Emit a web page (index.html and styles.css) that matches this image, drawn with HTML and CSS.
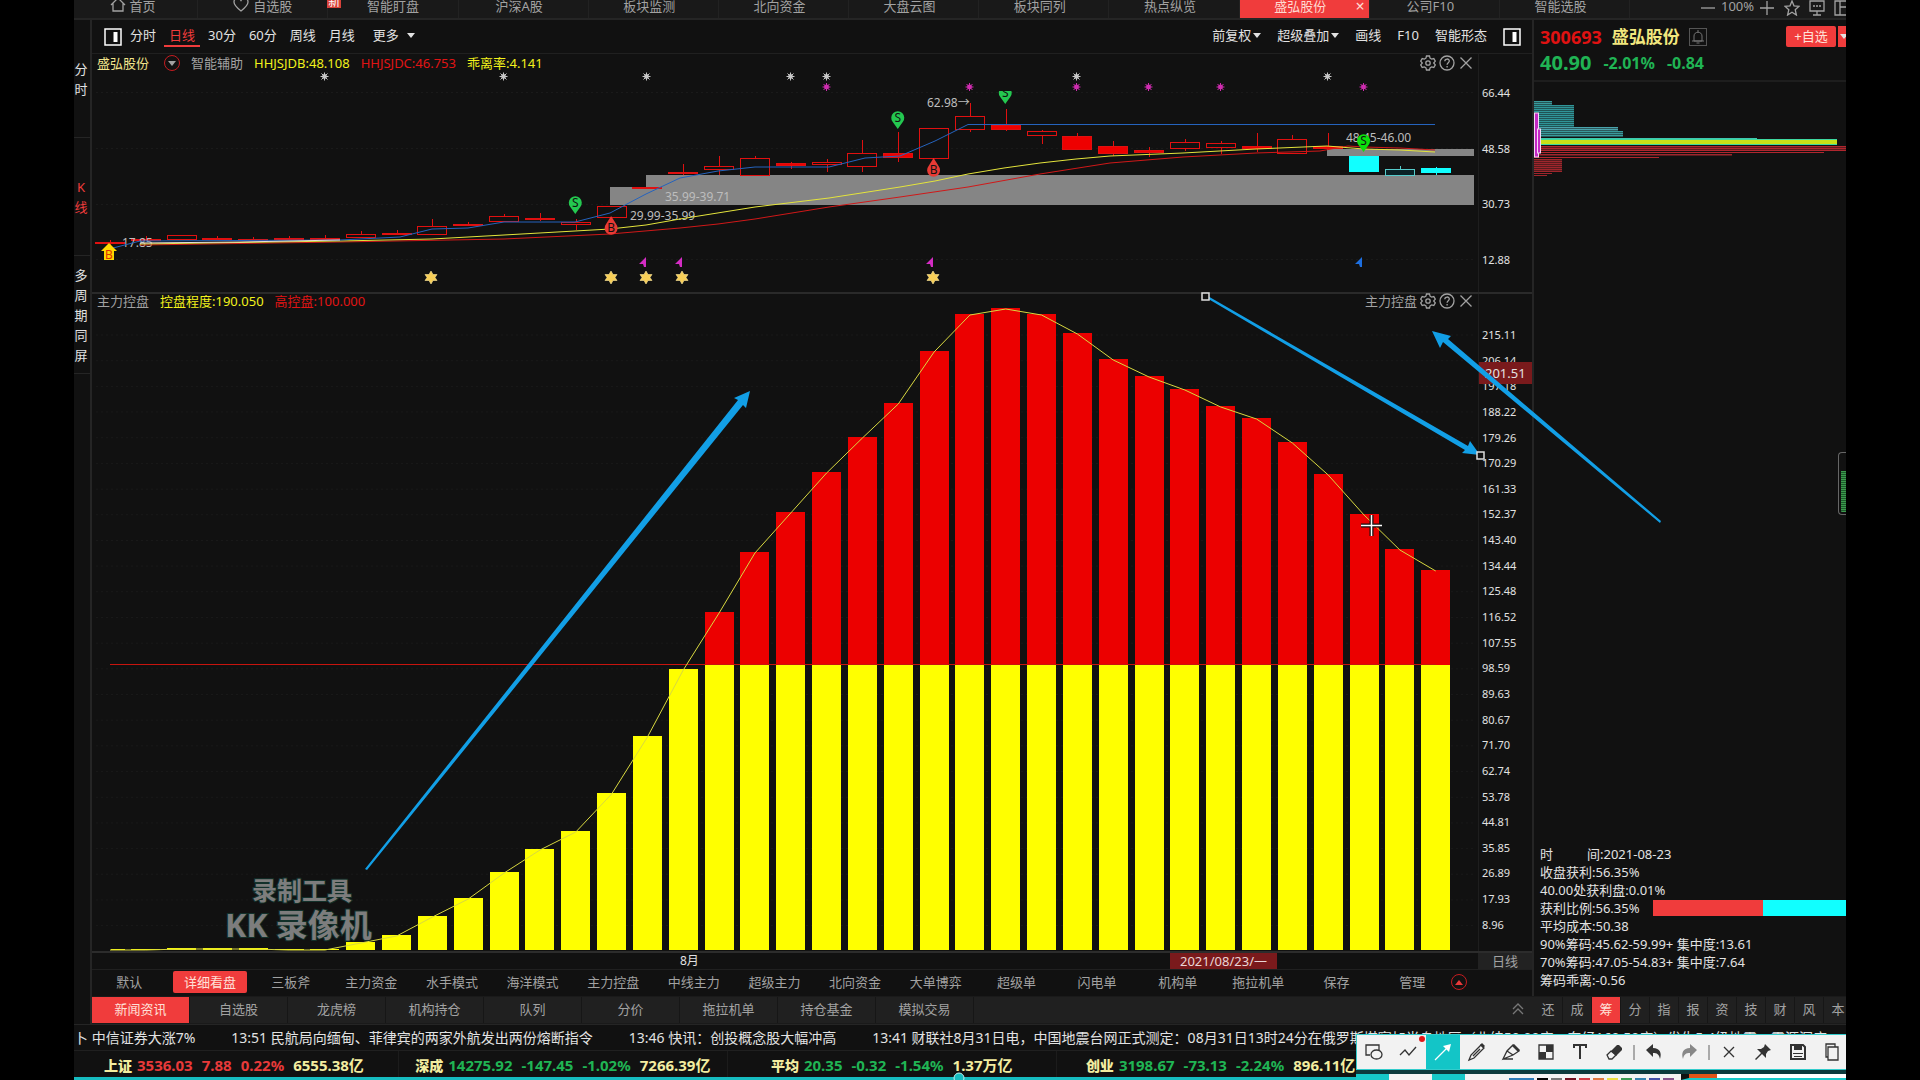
FILE: index.html
```html
<!DOCTYPE html>
<html lang="zh-CN">
<head>
<meta charset="utf-8">
<meta name="viewport" content="width=device-width, initial-scale=1">
<title>盛弘股份 300693</title>
<link rel="stylesheet" href="styles.css">
</head>
<body>
<svg class="defs" aria-hidden="true">
  <symbol id="gear" viewBox="0 0 16 16"><path d="M6.500 1h3l.6 2.200 1.500.9 2.200-.6 1.500 2.600L13.700 8l1.600 1.900-1.500 2.600-2.200-.6-1.500.9-.6 2.200h-3l-.6-2.200-1.500-.9-2.200.6L.7 9.900 2.300 8 .7 6.100l1.500-2.600 2.200.6 1.500-.9z"/><circle cx="8" cy="8" r="2.200"/></symbol>
  <symbol id="help" viewBox="0 0 16 16"><circle cx="8" cy="8" r="7"/><path d="M5.800 6.300c0-3 4.500-3 4.500-.2 0 1.600-2.200 1.700-2.200 3.600M8.100 11v1.400"/></symbol>
  <symbol id="close" viewBox="0 0 16 16"><path d="M2.500 2.500l11 11M13.500 2.500l-11 11"/></symbol>
  <symbol id="pane" viewBox="0 0 18 18"><rect x="1" y="1" width="16" height="16"/><path d="M9.500 4h4v10h-4z" fill="currentColor" stroke="none"/></symbol>
</svg>
<div class="app">
  <nav class="tabs">
    <div class="tab-list">
      <a class="tab" href="#"><svg class="ico" viewBox="0 0 16 16"><path d="M1 8l7-7 7 7M3 6.500V14h10V6.500"/></svg>首页</a>
      <a class="tab" href="#"><svg class="ico" viewBox="0 0 16 16"><path d="M8 14C3 10 1 8 1 5c0-4 5-5 7-1.500C10 0 15 1 15 5c0 3-2 5-7 9z"/></svg>自选股<span class="new">新</span></a>
      <a class="tab" href="#">智能盯盘</a>
      <a class="tab" href="#">沪深A股</a>
      <a class="tab" href="#">板块监测</a>
      <a class="tab" href="#">北向资金</a>
      <a class="tab" href="#">大盘云图</a>
      <a class="tab" href="#">板块同列</a>
      <a class="tab" href="#">热点纵览</a>
      <a class="tab active" href="#">盛弘股份<span class="tab-x">×</span></a>
      <a class="tab" href="#">公司F10</a>
      <a class="tab" href="#">智能选股</a>
    </div>
    <div class="tab-tools">
      <button aria-label="缩小"><svg class="ico" viewBox="0 0 16 16"><path d="M1 8h14"/></svg></button>
      <span>100%</span>
      <button aria-label="放大"><svg class="ico" viewBox="0 0 16 16"><path d="M1 8h14M8 1v14"/></svg></button>
      <button aria-label="收藏"><svg class="ico" viewBox="0 0 16 16"><path d="M8 1l2 4.800 5 .5-3.800 3.400L12.400 15 8 12.200 3.600 15l1.200-5.300L1 6.300l5-.5z"/></svg></button>
      <button aria-label="消息"><svg class="ico" viewBox="0 0 16 16"><path d="M1 1h14v10H1zM8 11v4M4 15h8M4 6h2M7 6h2M10 6h2"/></svg></button>
      <button aria-label="布局"><svg class="ico" viewBox="0 0 16 16"><path d="M1 1h14v14H1zM6 1v14M6 7h9"/></svg></button>
    </div>
  </nav>

  <div class="workspace">
    <aside class="rail">
      <button>分时</button>
      <button class="on">K线</button>
      <button>多周期同屏</button>
    </aside>

    <main class="center">
      <div class="toolbar">
        <div class="periods">
          <button aria-label="左侧面板"><svg class="pane"><use href="#pane"/></svg></button>
          <button>分时</button>
          <button class="on">日线</button>
          <button>30分</button>
          <button>60分</button>
          <button>周线</button>
          <button>月线</button>
          <button class="more">更多<i class="caret wide"></i></button>
        </div>
        <div class="views">
          <button>前复权<i class="caret"></i></button>
          <button>超级叠加<i class="caret"></i></button>
          <button>画线</button>
          <button>F10</button>
          <button>智能形态</button>
          <button aria-label="右侧面板"><svg class="pane"><use href="#pane"/></svg></button>
        </div>
      </div>

      <section class="chart price">
        <div class="plot">
          <header class="legend">
            <span class="gold">盛弘股份</span>
            <button class="drop" aria-label="选择指标"><i class="caret"></i></button>
            <span>智能辅助</span>
            <span class="yellow">HHJSJDB:48.108</span>
            <span class="red">HHJSJDC:46.753</span>
            <span class="yellow">乖离率:4.141</span>
            <span class="legend-tools">
              <button aria-label="设置"><svg class="ico"><use href="#gear"/></svg></button>
              <button aria-label="帮助"><svg class="ico"><use href="#help"/></svg></button>
              <button aria-label="关闭"><svg class="ico"><use href="#close"/></svg></button>
            </span>
          </header>
          <svg class="canvas" id="price" viewBox="92 73 1386 219"></svg>
        </div>
        <div class="axis">
          <span>66.44</span><span>48.58</span><span>30.73</span><span>12.88</span>
        </div>
      </section>

      <section class="chart control">
        <div class="plot">
          <header class="legend">
            <span>主力控盘</span>
            <span class="yellow">控盘程度:190.050</span>
            <span class="red">高控盘:100.000</span>
            <span class="legend-tools">
              <span>主力控盘</span>
              <button aria-label="设置"><svg class="ico"><use href="#gear"/></svg></button>
              <button aria-label="帮助"><svg class="ico"><use href="#help"/></svg></button>
              <button aria-label="关闭"><svg class="ico"><use href="#close"/></svg></button>
            </span>
          </header>
          <svg class="canvas" id="control" viewBox="92 308 1386 643"></svg>
        </div>
        <div class="axis">
          <span>215.11</span><span>206.14</span><span>197.18</span><span>188.22</span><span>179.26</span><span>170.29</span><span>161.33</span><span>152.37</span><span>143.40</span><span>134.44</span><span>125.48</span><span>116.52</span><span>107.55</span><span>98.59</span><span>89.63</span><span>80.67</span><span>71.70</span><span>62.74</span><span>53.78</span><span>44.81</span><span>35.85</span><span>26.89</span><span>17.93</span><span>8.96</span>
          <b class="cursor-value">201.51</b>
        </div>
      </section>

      <div class="dates">
        <span class="month">8月</span>
        <span class="cursor-date">2021/08/23/一</span>
        <span class="cycle">日线</span>
      </div>

      <div class="templates">
        <button>默认</button>
        <button class="on">详细看盘</button>
        <button>三板斧</button>
        <button>主力资金</button>
        <button>水手模式</button>
        <button>海洋模式</button>
        <button>主力控盘</button>
        <button>中线主力</button>
        <button>超级主力</button>
        <button>北向资金</button>
        <button>大单博弈</button>
        <button>超级单</button>
        <button>闪电单</button>
        <button>机构单</button>
        <button>拖拉机单</button>
        <button>保存</button>
        <button>管理</button>
        <button class="drop" aria-label="收起"><i class="caret up"></i></button>
      </div>
    </main>

    <aside class="quote">
      <header class="quote-head">
        <div class="quote-name">
          <b class="code">300693</b><b class="name">盛弘股份</b>
          <button class="bell" aria-label="预警"><svg viewBox="0 0 16 16"><path d="M4 12V7c0-5 8-5 8 0v5zM2 12h12M6.500 14h3M8 1v2"/></svg></button>
          <button class="add">+自选</button><button class="add-more" aria-label="更多自选"><i class="caret"></i></button>
        </div>
        <div class="quote-price"><b class="last">40.90</b><b>-2.01%</b><b>-0.84</b></div>
      </header>
      <svg class="chips" id="chips" viewBox="1534 82 312 200"></svg>
      <div class="side-widget"></div>
      <dl class="stats">
        <div><dt class="spread">时间</dt><dd>:2021-08-23</dd></div>
        <div><dt>收盘获利</dt><dd>:56.35%</dd></div>
        <div><dt>40.00处获利盘</dt><dd>:0.01%</dd></div>
        <div><dt>获利比例</dt><dd>:56.35%</dd><span class="ratio"></span></div>
        <div><dt>平均成本</dt><dd>:50.38</dd></div>
        <div><dt>90%筹码</dt><dd>:45.62-59.99+ 集中度:13.61</dd></div>
        <div><dt>70%筹码</dt><dd>:47.05-54.83+ 集中度:7.64</dd></div>
        <div><dt>筹码乖离</dt><dd>:-0.56</dd></div>
      </dl>
    </aside>

    <nav class="bottom-tabs">
      <div class="info-tabs">
        <button class="on">新闻资讯</button>
        <button>自选股</button>
        <button>龙虎榜</button>
        <button>机构持仓</button>
        <button>队列</button>
        <button>分价</button>
        <button>拖拉机单</button>
        <button>持仓基金</button>
        <button>模拟交易</button>
      </div>
      <button class="expand" aria-label="展开"><svg class="ico" viewBox="0 0 16 16"><path d="M3 8l5-5 5 5M3 13l5-5 5 5"/></svg></button>
      <div class="side-tabs">
        <button>还</button><button>成</button><button class="on">筹</button><button>分</button><button>指</button><button>报</button><button>资</button><button>技</button><button>财</button><button>风</button><button>本</button>
      </div>
    </nav>
  </div>

  <div class="news">
    <a href="#">卜 中信证券大涨7%</a>
    <a href="#">13:51 民航局向缅甸、菲律宾的两家外航发出两份熔断指令</a>
    <a href="#">13:46 快讯：创投概念股大幅冲高</a>
    <a href="#">13:41 财联社8月31日电，中国地震台网正式测定：08月31日13时24分在俄罗斯堪察加半岛地区（北纬50.00度，东经160.50度）发生5.4级地震，震源深度</a>
  </div>

  <footer class="indices">
    <div><b>上证</b><span class="up">3536.03</span><span class="up">7.88</span><span class="up">0.22%</span><span>6555.38亿</span></div>
    <div><b>深成</b><span class="down">14275.92</span><span class="down">-147.45</span><span class="down">-1.02%</span><span>7266.39亿</span></div>
    <div><b>平均</b><span class="down">20.35</span><span class="down">-0.32</span><span class="down">-1.54%</span><span>1.37万亿</span></div>
    <div><b>创业</b><span class="down">3198.67</span><span class="down">-73.13</span><span class="down">-2.24%</span><span>896.11亿</span></div>
    <div class="rest"></div>
  </footer>

  <svg class="ink" viewBox="74 0 1772 1080">
    <g class="watermark">
      <text class="wm-small" x="252" y="900">录制工具</text>
      <text class="wm-large" x="225" y="937">KK 录像机</text>
    </g>
    <g class="arrows">
      <path d="M365 869L738 400 734 398 750 391 746 408 743 405 367 870z"/>
      <path d="M1206 295L1468 446 1470 441 1480 455 1462 453 1465 450 1205 297z"/>
      <path d="M1660 523L1443 342 1440 348 1432 331 1451 336 1448 339 1661 521z"/>
    </g>
    <g class="handles">
      <rect x="1202" y="293" width="7" height="7"/><rect x="1477" y="452" width="7" height="7"/>
    </g>
    <path class="cross-edge" d="M1361 525.500h21M1371.500 515v21"/>
    <path class="cross" d="M1361 525.500h21M1371.500 515v21"/>
    <circle class="grip" cx="959" cy="1078" r="5"/>
  </svg>

  <div class="options">
    <span class="opt"></span><span class="opt light"></span><span class="opt"></span>
    <span class="opt swatches"><i></i><i></i><i></i><i></i><i></i><i></i><i></i><i></i><i></i><i></i><i></i></span>
    <span class="opt page"></span>
  </div>
  <div class="capture" role="toolbar" aria-label="截图工具">
    <button aria-label="形状"><svg viewBox="0 0 20 20"><path d="M6 13H2V3h13v5"/><ellipse cx="12.500" cy="12.500" rx="5.500" ry="4.500"/></svg></button>
    <button class="dot" aria-label="折线"><svg viewBox="0 0 20 20"><path d="M2 13l5-5 4 5 7-8"/></svg></button>
    <button class="on" aria-label="箭头"><svg viewBox="0 0 20 20"><path d="M2 18L14 6"/><path class="fill" d="M18 2l-2 8-6-6z"/></svg></button>
    <button aria-label="画笔"><svg viewBox="0 0 20 20"><path d="M2 18l2-5L14 3l3 3L7 16zM6 14l7-7"/><path class="fill" d="M13 3l2-2 3 3-2 2z"/></svg></button>
    <button aria-label="荧光笔"><svg viewBox="0 0 20 20"><path d="M2 17l4-8 6-6 6 6-6 4zM2 17h10M6 9l6 4"/><path class="fill" d="M11 4l2-2 6 6-2 2z"/></svg></button>
    <button aria-label="马赛克"><svg viewBox="0 0 20 20"><path d="M3 3h14v14H3z"/><path class="fill" d="M3 10h7v7H3zM10 3h7v7h-7z"/></svg></button>
    <button aria-label="文字"><svg viewBox="0 0 20 20"><path class="bold" d="M4 6V3h12v3M10 3v14"/></svg></button>
    <button aria-label="橡皮"><svg viewBox="0 0 20 20"><path d="M3 13l4-4 5 4-4 4H5z"/><path class="fill" d="M7 9l6-6h2l3 3v2l-6 6z"/></svg></button>
    <i class="rule"></i>
    <button aria-label="撤销"><svg viewBox="0 0 20 20"><path class="fill" d="M2 8l7-6v4c7 0 9 5 7 11-1-5-3-6-7-6v4z"/></svg></button>
    <button class="off" aria-label="重做"><svg viewBox="0 0 20 20"><path class="fill" d="M18 8l-7-6v4C4 6 2 11 4 17c1-5 3-6 7-6v4z"/></svg></button>
    <i class="rule"></i>
    <button aria-label="退出"><svg viewBox="0 0 20 20"><path d="M5 5l10 10M15 5L5 15"/></svg></button>
    <button aria-label="固定"><svg viewBox="0 0 20 20"><path class="fill" d="M12 2l6 6-3 1-2 3v4l-4-4-6 6-1-1 6-6-4-4h4l3-2z"/></svg></button>
    <button aria-label="保存"><svg viewBox="0 0 20 20"><path class="bold" d="M3 3h12l2 2v12H3z"/><path class="fill" d="M6 3h8v5H6zM5 11h10v1H5zM6 14h8v1H6z"/></svg></button>
    <button aria-label="复制"><svg viewBox="0 0 20 20"><path d="M6 5h10v13H6zM6 15H4V2h9v3"/></svg></button>
  </div>
</div>
<script src="script.js"></script>
</body>
</html>
```
FILE: styles.css
```css
* { box-sizing: border-box; }
:root {
  --bg: #111;
  --line: #252525;
  --text: #e2e2e2;
  --muted: #a2a2a2;
  --accent: #f03c3c;
  --teal: #16bcc0;
}
body {
  margin: 0;
  background: #000;
  color: var(--text);
  font: 13px/16px "Noto Sans", "Noto Sans CJK SC", sans-serif;
}
button {
  margin: 0;
  padding: 0;
  border: 0;
  background: none;
  color: inherit;
  font: inherit;
  white-space: nowrap;
}
a { color: inherit; text-decoration: none; }
dl, dd { margin: 0; }
.defs { position: absolute; width: 0; height: 0; }
.app {
  position: relative;
  margin: 0 74px;
  overflow: hidden;
  background: var(--bg);
}
.ico {
  display: block;
  width: 16px;
  height: 16px;
  fill: none;
  stroke: currentColor;
  stroke-width: 1.300;
}
.caret {
  display: inline-block;
  margin-left: 2px;
  border: 4px solid transparent;
  border-top: 5px solid currentColor;
  border-bottom: 0;
  vertical-align: 2px;
}
.caret.wide { margin-left: 8px; }
.caret.up { border-top: 0; border-bottom: 5px solid currentColor; }
.yellow { color: #f2f21c; }
.red { color: #e01414; }
.gold { color: #f2e48c; }

.tabs {
  display: flex;
  height: 20px;
  border-bottom: 2px solid var(--line);
  background: #191919;
  color: var(--muted);
  line-height: 12px;
}
.tab-list { display: flex; flex: 1; margin-left: -6px; }
.tab {
  display: flex;
  flex: 1 1 0;
  justify-content: center;
  gap: 4px;
  position: relative;
  padding-right: 8px;
  border-right: 1px solid #222;
}
.tab:nth-child(-n+3) { padding: 0 4px; }
.tab .ico { margin-top: -3px; }
.tab.active { background: var(--accent); color: #ffd9d0; }
.tab-x { position: absolute; right: 4px; top: 0; font-size: 16px; }
.new {
  position: absolute;
  right: -14px;
  top: -4px;
  padding: 0 1px;
  background: #d8423a;
  color: #fff;
  font-size: 12px;
}
.tab-tools { display: flex; gap: 9px; width: 216px; padding-left: 70px; }
.tab-tools .ico { margin-top: -2px; }
.tab-tools span { margin: 0 -4px; }

.workspace {
  display: grid;
  grid-template-columns: 18px minmax(0, 1fr) 312px;
}
.rail {
  grid-row: 1 / 3;
  border-right: 2px solid var(--line);
}
.rail button {
  display: block;
  width: 16px;
  height: 118px;
  padding-right: 2px;
  border-bottom: 1px solid var(--line);
  line-height: 20px;
  white-space: normal;
  word-break: break-all;
}
.rail .on { color: var(--accent); }
.center { border-right: 2px solid var(--line); }

.toolbar {
  display: flex;
  justify-content: space-between;
  height: 34px;
  padding: 0 11px 0 12px;
  border-bottom: 1px solid #202020;
}
.periods, .views { display: flex; align-items: flex-start; }
.periods { gap: 3px; }
.views { gap: 16px; }
.toolbar button { height: 27px; line-height: 30px; }
.periods button { padding: 0 5px; }
.periods button:first-child { padding: 0; }
.periods .on { border-bottom: 2px solid var(--accent); color: var(--accent); }
.periods .more { padding-left: 10px; }
.pane {
  display: block;
  width: 18px;
  height: 18px;
  margin-top: 7px;
  fill: none;
  stroke: #fff;
  stroke-width: 1.500;
  color: #fff;
}

.chart { display: grid; grid-template-columns: minmax(0, 1fr) 54px; }
.chart.control { border-top: 2px solid #2a2a2a; }
.legend {
  display: flex;
  align-items: center;
  gap: 11px;
  height: 19px;
  padding: 0 4px 2px 5px;
  color: var(--muted);
  white-space: nowrap;
}
.control .legend { height: 14px; padding-bottom: 0; }
.legend-tools { display: flex; align-items: center; gap: 3px; margin-left: auto; }
.legend .drop { margin: 0 0 0 4px; }
.drop {
  width: 16px;
  height: 16px;
  border: 1px solid #c41c20;
  border-radius: 50%;
  line-height: 12px;
}
.drop .caret { margin: 0; }
.canvas { display: block; width: 100%; overflow: visible; }
.axis {
  position: relative;
  display: flex;
  flex-direction: column;
  justify-content: space-between;
  padding: 31px 0 24px 3px;
  border-left: 1px solid #1e1e1e;
  font-size: 11px;
}
.control .axis { padding: 33px 0 18px 3px; }
.cursor-value {
  position: absolute;
  top: 68px;
  left: 0;
  right: 0;
  padding-left: 6px;
  background: #7a1a1c;
  font-size: 13px;
  font-weight: 400;
  line-height: 22px;
}

.grid-line { stroke: #1a1a1a; stroke-dasharray: 2 3; }
.zone { fill: #858585; }
.line { fill: none; stroke-width: 1; }
.line.blue { stroke: #2563bd; }
.line.fast { stroke: #e4e43c; }
.line.slow { stroke: #d01818; }
.line.pale { stroke: #e8e0d8; }
.candle { stroke: #e01010; fill: #111; }
.candle.solid { fill: #ee0000; }
.candle.cyan { stroke: #1ff; fill: #1ff; }
.candle.cyan-open { stroke: #5cc; fill: #0a2226; }
.chart-note { fill: #bdbdbd; font-size: 12px; }
.bar-high { fill: #ec0000; }
.bar-low { fill: #ff0; }
.level { stroke: #c8140e; }
.mark-text { font-size: 12px; text-anchor: middle; }

.dates {
  display: grid;
  grid-template-columns: 588fr 490fr 107fr 201fr 54px;
  height: 19px;
  border-top: 2px solid #2c2c2c;
  border-bottom: 1px solid #202020;
}
.month { grid-column: 2; font-size: 12px; }
.cursor-date { background: #7a1a1c; color: #ead6d6; text-align: center; }
.cycle { grid-column: 5; background: #222; color: var(--muted); text-align: center; }

.templates {
  display: flex;
  align-items: center;
  height: 26px;
  margin-left: -3px;
  padding: 0 65px 2px 0;
  color: var(--muted);
}
.templates button { flex: 81 1 0; line-height: 22px; }
.templates button:nth-child(n+16) { flex-grow: 76; }
.templates .on {
  flex-grow: 75;
  margin: 0 3px;
  border-radius: 2px;
  background: var(--accent);
  color: #ffe0d8;
}
.templates button.drop { flex: 0 0 16px; margin: 0 0 0 1px; line-height: 10px; color: #ddd; }

.quote { display: flex; flex-direction: column; position: relative; min-width: 0; }
.quote-head { height: 62px; padding: 4px 0 0 6px; border-bottom: 2px solid #1e1e1e; }
.quote-name { display: flex; align-items: center; height: 25px; white-space: nowrap; }
.code { color: #e01212; font-size: 18px; }
.name { margin-left: 10px; color: #f2e77e; font-size: 17px; }
.bell { width: 18px; height: 18px; margin-left: 9px; border: 1px solid #555; }
.bell svg { display: block; width: 16px; fill: none; stroke: #777; }
.add {
  width: 50px;
  margin-left: auto;
  border-radius: 2px;
  background: var(--accent);
  color: #ffe0d8;
  line-height: 21px;
}
.add-more {
  width: 8px;
  margin-left: 2px;
  overflow: hidden;
  background: var(--accent);
  line-height: 21px;
}
.quote-price { display: flex; align-items: center; gap: 12px; height: 28px; color: #20b454; font-size: 16px; }
.last { font-size: 20px; }
.chips { display: block; width: 100%; }
.side-widget {
  align-self: flex-end;
  width: 8px;
  height: 63px;
  margin-top: 170px;
  padding: 18px 0 2px 2px;
  border: 1px solid #666;
  border-right: 0;
  border-radius: 4px 0 0 4px;
  background: repeating-linear-gradient(#3d9a4d 0 1px, #1c5a2b 1px 2px) content-box;
}
.stats { margin-top: auto; padding: 0 0 7px 6px; line-height: 18px; white-space: nowrap; }
.stats > div { display: flex; }
.spread { width: 60px; text-align-last: justify; }
.ratio {
  flex: 1;
  height: 16px;
  margin: 1px 0 0 13px;
  background: linear-gradient(90deg, var(--accent) 57%, #1ff 57%);
}

.bottom-tabs {
  grid-column: 2 / 4;
  display: flex;
  height: 28px;
  border-top: 1px solid #1a1a1a;
  border-bottom: 1px solid #1a1a1a;
  background: #202020;
  color: var(--muted);
}
.bottom-tabs button { padding-bottom: 2px; }
.info-tabs { display: flex; flex: 1; }
.info-tabs button { width: 98px; border-right: 1px solid #161616; }
.bottom-tabs .on { background: var(--accent); color: #ffe0d8; }
.expand { margin-right: 8px; color: #777; }
.side-tabs { display: flex; width: 312px; overflow: hidden; }
.side-tabs button { flex: 0 0 29px; border-right: 1px solid #161616; }

.news {
  display: flex;
  gap: 36px;
  height: 27px;
  overflow: hidden;
  border-top: 1px solid var(--line);
  border-bottom: 1px solid #202020;
  font-size: 14px;
  line-height: 26px;
  white-space: nowrap;
}
.indices {
  display: flex;
  height: 29px;
  margin-left: -4px;
  border-bottom: 3px solid var(--teal);
  color: #f3eda0;
  font-size: 15px;
  font-weight: 700;
  line-height: 29px;
  white-space: nowrap;
}
.indices div {
  display: flex;
  flex: 329 1 0;
  justify-content: center;
  gap: 9px;
  border-right: 1px solid #1c1c1c;
}
.indices .rest { flex-grow: 461; }
.indices b { margin-right: -4px; font-size: 14px; }
.up { color: #e83a3a; }
.down { color: #20b454; }

.ink { position: absolute; top: 0; left: 0; width: 100%; pointer-events: none; }
.arrows { fill: #129fe6; }
.handles { fill: #111; stroke: #ddd; stroke-width: 1.500; }
.cross { stroke: #fff; stroke-width: 1.500; }
.cross-edge { stroke: #111; stroke-width: 4; }
.grip { fill: var(--teal); stroke: #bfeeee; }
.watermark { fill: #7d7d7d; font-weight: 700; stroke: #12302a; stroke-width: 2; paint-order: stroke; }
.wm-small { font-size: 25px; }
.wm-large { font-size: 32px; }

.options {
  position: absolute;
  right: 0;
  bottom: 0;
  display: flex;
  width: 490px;
  height: 10px;
  padding-top: 4px;
  background: #0c3a3c;
}
.opt { width: 33px; background: #16c8c8; }
.opt.light { width: 43px; background: #f3f3f3; }
.opt.swatches { display: flex; gap: 3px; width: 216px; padding: 4px 0 0 44px; background: #f3f3f3; }
.swatches i { width: 11px; background: #000; }
.swatches i:first-child { width: 25px; background: #2c7cb8; }
.swatches i:nth-child(3) { background: #777; }
.swatches i:nth-child(4) { background: #701020; }
.swatches i:nth-child(5) { background: #d03c44; }
.swatches i:nth-child(6) { background: #e07840; }
.swatches i:nth-child(7) { background: #eee040; }
.swatches i:nth-child(8) { background: #389c54; }
.swatches i:nth-child(9) { background: #3484b0; }
.swatches i:nth-child(10) { background: #4450a8; }
.swatches i:nth-child(11) { background: #86528c; }
.opt.page { flex: 1; border-left: 8px solid #111; border-bottom: 2px solid #16c8c8; background: linear-gradient(90deg, #e05418 28px, #fff 28px); }
.capture {
  position: absolute;
  right: -4px;
  bottom: 10px;
  display: flex;
  align-items: center;
  width: 494px;
  height: 36px;
  border: 1px solid #3cc;
  background: #f2f2f2;
  color: #333;
}
.capture button { position: relative; flex: 1; align-self: stretch; }
.capture svg {
  display: block;
  width: 20px;
  height: 20px;
  margin: 0 auto;
  fill: none;
  stroke: currentColor;
  stroke-width: 1.300;
}
.capture .fill { fill: currentColor; stroke: none; }
.capture .bold { stroke-width: 2; }
.capture .on { background: #13c5c7; color: #fff; }
.capture .off { color: #888; }
.capture .dot::after {
  content: "";
  position: absolute;
  top: 1px;
  right: 1px;
  width: 6px;
  height: 6px;
  border-radius: 50%;
  background: #e01818;
}
.rule { width: 2px; height: 15px; margin: 0 2px; background: #aaa; }
```
FILE: script.js
```javascript
const NS = "http://www.w3.org/2000/svg";

function add(parent, tag, attrs, text) {
  const el = document.createElementNS(NS, tag);
  for (const key in attrs) el.setAttribute(key, attrs[key]);
  if (text) el.textContent = text;
  parent.appendChild(el);
  return el;
}

// Centre of the n-th trading day
const dayX = n => 110 + 35.83 * n;

/* Price chart */
const price = document.getElementById("price");
[92.5, 148.5, 204.5, 259.5].forEach(y =>
  add(price, "line", { class: "grid-line", x1: 96, x2: 1474, y1: y, y2: y }));

[[610, 187, 18], [646, 175, 30], [1327, 149, 7]].forEach(([x, y, h]) =>
  add(price, "rect", { class: "zone", x, y, width: 1474 - x, height: h }));

// kind, body top, body bottom, wick top, wick bottom
const candles = [
  ["solid", 242, 243, 240, 246], ["solid", 239, 240, 236, 241], ["", 235, 239, 235, 239],
  ["solid", 238, 239, 236, 239], ["solid", 239, 240, 237, 240], ["solid", 238, 239, 236, 239],
  ["solid", 238, 239, 235, 240], ["", 234, 237, 231, 237], ["solid", 233, 234, 230, 235],
  ["", 226, 234, 219, 234], ["solid", 224, 225, 222, 226], ["", 216, 221, 214, 221],
  ["solid", 218, 219, 213, 221], ["", 222, 224, 219, 230], ["", 206, 217, 206, 217],
  ["solid", 187, 188, 187, 188], ["solid", 172, 173, 164, 175], ["", 166, 169, 156, 175],
  ["", 158, 175, 156, 175], ["solid", 163, 165, 162, 169], ["", 162, 164, 159, 172],
  ["", 153, 166, 140, 172], ["solid", 153, 157, 132, 162], ["", 128, 158, 128, 158],
  ["", 116, 129, 103, 132], ["solid", 125, 129, 109, 131], ["", 131, 135, 130, 144],
  ["solid", 136, 149, 133, 149], ["solid", 146, 153, 141, 156], ["solid", 150, 152, 147, 157],
  ["", 142, 148, 139, 151], ["", 143, 147, 141, 154], ["solid", 146, 148, 133, 152],
  ["", 139, 153, 135, 153], ["solid", 146, 148, 133, 149], ["cyan", 156, 171, 156, 171],
  ["cyan-open", 169, 175, 166, 175], ["cyan", 168, 172, 167, 175]
];
candles.forEach(([kind, top, bottom, high, low], n) => {
  const x = Math.round(dayX(n)) + 0.5;
  const cls = "candle " + kind;
  add(price, "line", { class: cls, x1: x, x2: x, y1: high, y2: low });
  add(price, "rect", { class: cls, x: x - 15, y: top + 0.5, width: 29, height: bottom - top });
});

[[122, 247, "17.85"], [665, 201, "35.99-39.71"], [630, 220, "29.99-35.99"],
 [927, 107, "62.98→"], [1346, 142, "48.45-46.00"]].forEach(([x, y, t]) =>
  add(price, "text", { class: "chart-note", x, y }, t));

const line = (svg, cls, points) => add(svg, "polyline", { class: "line " + cls, points });
line(price, "slow", "140,245 340,242 504,239 610,234 680,228 718,224 755,219 829,207 900,197 968,187 1040,174 1110,163 1183,157 1256,153 1320,151 1348,146 1364,147 1400,148 1435,150");
line(price, "fast", "140,244 340,241 432,239 504,235 575,231 610,229 646,225 680,219 755,207 829,198 900,187 935,181 968,174 1004,168 1040,163 1076,159 1110,156 1183,153 1256,149 1327,146 1364,149 1400,150 1435,152");
line(price, "blue", "113,248 140,241 340,240 400,237 432,229 468,228 504,222 575,222 610,213 646,194 680,178 718,171 755,167 829,167 865,158 900,156 935,141 968,124.5 1435,124.5");
line(price, "pale", "140,243 240,242 340,240");

function burst(n, y, colour) {
  const x = Math.round(dayX(n)) - 0.5;
  add(price, "path", { d: `M${x - 4} ${y}h8M${x} ${y - 4}v8M${x - 3} ${y - 3}l6 6M${x + 3} ${y - 3}l-6 6`, stroke: colour });
  add(price, "circle", { cx: x, cy: y, r: 2.4, fill: colour });
}
[6, 11, 15, 19, 20, 27, 34].forEach(n => burst(n, 76.5, "#c8c8c8"));
[20, 24, 27, 29, 31, 35].forEach(n => burst(n, 87, "#d02cb0"));

function pin(n, y, letter, colour, flip) {
  const x = dayX(n) - 0.5;
  const d = flip
    ? `M${x} ${y - 10}l5 8a6.500 6.500 0 1 1 -10 0z`
    : `M${x} ${y + 11}l-5 -7a6.500 6.500 0 1 1 10 0z`;
  add(price, "path", { d, fill: colour });
  add(price, "text", { class: "mark-text", x, y: flip ? y + 6 : y + 4, fill: "#111" }, letter);
}
pin(13, 203, "S", "#24c850");
pin(22, 118, "S", "#24c850");
pin(25, 93, "S", "#24c850");
add(price, "rect", { x: 990, y: 82, width: 26, height: 9, fill: "#111" });
pin(35, 141, "S", "#0ce00c");
pin(14, 226, "B", "#e83a34", true);
pin(23, 168, "B", "#e83a34", true);
add(price, "path", { d: "M109 243l8 8h-3v9h-10v-9h-3z", fill: "#ffd800" });
add(price, "text", { class: "mark-text", x: 109, y: 259, fill: "#e03000" }, "B");

[[646, "#d42cc4"], [682, "#d42cc4"], [933, "#d42cc4"], [1362, "#1d6fe0"]].forEach(([x, fill]) =>
  add(price, "path", { d: `M${x} 257v10h-2l-1 -3h-4z`, fill }));
[9, 14, 15, 16, 23].forEach(n => {
  const x = Math.round(dayX(n)) - 1;
  add(price, "path", {
    d: `M${x} 271l2 3.500h4l-2 3 2 3h-4l-2 3.500-2-3.500h-4l2-3-2-3h4z`, fill: "#f8cf58", stroke: "#fbe59a", "stroke-width": 0.6
  });
});

/* Control-strength chart */
const control = document.getElementById("control");
for (let k = 0; k < 24; k++) {
  const y = 335 + 25.68 * k;
  add(control, "line", { class: "grid-line", x1: 96, x2: 1474, y1: y, y2: y });
}
const BASE = 950, LEVEL = 665;
const tops = [949, 949, 948, 948, 948, 949, 949, 942, 935, 916, 898, 872, 849, 831, 793, 736, 669,
  612, 552, 512, 472, 437, 403, 351, 314, 308, 314, 333, 359, 376, 389, 406, 418, 442, 474, 514, 549, 570];
tops.forEach((top, n) => {
  const x = Math.round(dayX(n) - 14.5);
  const low = Math.max(top, LEVEL);
  // The first day is drawn from its centre
  const cut = n === 0 ? 15 : 0;
  add(control, "rect", { class: "bar-low", x: x + cut, y: low, width: 29 - cut, height: BASE - low });
  if (top < LEVEL) add(control, "rect", { class: "bar-high", x, y: top, width: 29, height: LEVEL - top });
});
add(control, "line", { class: "level", x1: 110, x2: 1436, y1: 664.5, y2: 664.5 });
add(control, "polyline", {
  points: tops.map((y, n) => `${dayX(n)},${y + 1}`).join(" "),
  fill: "none", stroke: "#d8d840"
});

/* Chip distribution: first row, last row, width, colour */
const chips = document.getElementById("chips");
[[101, 104, 18, "#3a9a9c"], [105, 126, 40, "#2f9598"], [127, 130, 84, "#4aa3ac"], [131, 136, 89, "#3a9a9c"],
 [138, 138, 223, "#3fc8b0"], [146, 150, 312, "#b0262e"], [152, 152, 290, "#b0262e"], [154, 155, 198, "#9e262c"],
 [157, 157, 125, "#b0262e"], [159, 171, 28, "#9e262c"], [173, 173, 18, "#9e262c"], [175, 175, 13, "#9e262c"]
].forEach(([from, to, width, fill]) => {
  add(chips, "rect", { x: 1534, y: from, width, height: to - from + 1, fill, opacity: 0.5 });
  for (let y = from; y <= to; y += 2) add(chips, "rect", { x: 1534, y, width, height: 1, fill });
});
add(chips, "rect", { x: 1534, y: 139, width: 303, height: 6, fill: "#3fd8a0" });
add(chips, "rect", { x: 1534, y: 140, width: 303, height: 4, fill: "#c8e018" });
[[1534.5, 113, 4, 44], [1537.5, 129, 3, 24]].forEach(([x, y, width, height]) =>
  add(chips, "rect", { x, y, width, height, fill: "#c428c4", stroke: "#f4d8f4" }));
```
